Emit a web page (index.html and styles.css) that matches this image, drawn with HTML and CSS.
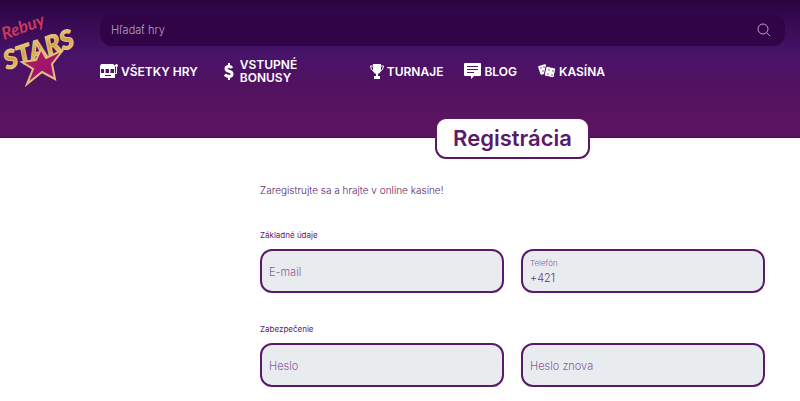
FILE: index.html
```html
<!DOCTYPE html>
<html lang="sk">
<head>
  <meta charset="UTF-8">
  <meta name="viewport" content="width=device-width, initial-scale=1.0">
  <title>Registrácia - Rebuy Stars</title>
  <link rel="stylesheet" href="styles.css">
</head>
<body>
  <header class="header">
    <a href="#" class="logo">
      <svg width="90" height="90" viewBox="0 0 90 90">
        <defs>
          <linearGradient id="gold" x1="0" y1="0" x2="0" y2="1">
            <stop offset="0" stop-color="#f6e3a0"/>
            <stop offset="0.5" stop-color="#cf9a45"/>
            <stop offset="1" stop-color="#f3d58a"/>
          </linearGradient>
          <linearGradient id="ruby" x1="0" y1="0" x2="1" y2="1">
            <stop offset="0" stop-color="#b81a65"/>
            <stop offset="1" stop-color="#8c1170"/>
          </linearGradient>
        </defs>
        <text class="logo-top" x="4" y="40" transform="rotate(-20 4 40)">Rebuy</text>
        <text class="logo-bottom" x="7" y="70" transform="rotate(-19 7 70)">STARS</text>
        <path d="M41 49 L46 58 L63 50 L52 64 L55 79 L42 72 L27 84 L33 69 L22 62 L36 60 Z" fill="url(#ruby)" stroke="#e3bd7c" stroke-width="2"/>
      </svg>
    </a>
    <div class="header-main">
      <form class="search">
        <input type="search" class="search-input" placeholder="Hľadať hry" aria-label="Hľadať hry">
        <button type="button" class="search-button" aria-label="Hľadať">
          <svg width="14" height="14" viewBox="0 0 14 14" fill="none" stroke="#b9a3c6" stroke-width="1">
            <circle cx="6" cy="6" r="5"/>
            <path d="M9.6 9.6 L13 13"/>
          </svg>
        </button>
      </form>
      <nav class="menu">
        <a href="#" class="menu-item">
          <svg width="18" height="16" viewBox="0 0 18 16">
            <path d="M2 1 H12 Q15 1 15 4 V15 H0 V4 Q0 1 2 1 Z" fill="#fff"/>
            <path d="M15 10.5 H16.5 V4" fill="none" stroke="#fff"/>
            <circle cx="16.5" cy="2.5" r="1.5" fill="#fff"/>
            <path d="M1 6 H4 V10 H1 Z M5.5 6 H9 V10 H5.5 Z M10.5 6 H14 V10 H10.5 Z M5 12 H11 V13 H5 Z" fill="#521466"/>
          </svg>
          <span>VŠETKY HRY</span>
        </a>
        <a href="#" class="menu-item menu-item-wide">
          <svg width="10" height="17" viewBox="0 0 10 17" fill="none" stroke="#fff" stroke-width="3">
            <path d="M8 5 Q7 3.5 5 3.5 Q2 3.5 2 5.7 Q2 7.5 5 8.2 Q8 9 8 11 Q8 13.5 5 13.5 Q2.5 13.5 1 11.5"/>
            <path d="M5 0 V4 M5 13 V17" stroke-width="2"/>
          </svg>
          <span>VSTUPNÉ BONUSY</span>
        </a>
        <a href="#" class="menu-item">
          <svg width="14" height="15" viewBox="0 0 14 15">
            <path d="M3 0 H11 V5 Q11 9 8 10 V12 H10 V15 H4 V12 H6 V10 Q3 9 3 5 Z" fill="#fff"/>
            <path d="M3 2 H0.5 Q0.5 6 4 7.5 M11 2 H13.5 Q13.5 6 10 7.5" fill="none" stroke="#fff"/>
          </svg>
          <span>TURNAJE</span>
        </a>
        <a href="#" class="menu-item">
          <svg width="17" height="16" viewBox="0 0 17 16">
            <path d="M1 0 H16 Q17 0 17 1 V12 Q17 13 16 13 H10 L7 16 V13 H1 Q0 13 0 12 V1 Q0 0 1 0 Z" fill="#fff"/>
            <path d="M3 3.5 H14 M3 6.5 H14 M3 9.5 H10" stroke="#521466"/>
          </svg>
          <span>BLOG</span>
        </a>
        <a href="#" class="menu-item">
          <svg width="18" height="14" viewBox="0 0 18 14">
            <rect x="1" y="1" width="8" height="9" rx="1" transform="rotate(-18 5 5)" fill="#fff"/>
            <rect x="7" y="3" width="10" height="10" rx="1" transform="rotate(12 12 8)" fill="#fff" stroke="#521466"/>
            <g fill="#521466">
              <circle cx="3" cy="4" r="0.7"/>
              <circle cx="6" cy="3" r="0.7"/>
              <circle cx="5" cy="7" r="0.7"/>
              <circle cx="11" cy="6" r="0.7"/>
              <circle cx="15" cy="7" r="0.7"/>
              <circle cx="10" cy="10" r="0.7"/>
              <circle cx="14" cy="11" r="0.7"/>
            </g>
          </svg>
          <span>KASÍNA</span>
        </a>
      </nav>
    </div>
  </header>

  <main class="content">
    <h1 class="title">Registrácia</h1>
    <p class="intro">Zaregistrujte sa a hrajte v online kasíne!</p>
    <form class="form">
      <fieldset class="group">
        <legend>Základné údaje</legend>
        <div class="fields">
          <input type="email" class="field" placeholder="E-mail" aria-label="E-mail">
          <div class="field field-labeled">
            <label for="phone">Telefón</label>
            <input type="tel" id="phone" value="+421">
          </div>
        </div>
      </fieldset>
      <fieldset class="group">
        <legend>Zabezpečenie</legend>
        <div class="fields">
          <input type="password" class="field" placeholder="Heslo" aria-label="Heslo">
          <input type="password" class="field" placeholder="Heslo znova" aria-label="Heslo znova">
        </div>
      </fieldset>
    </form>
  </main>
</body>
</html>
```
FILE: styles.css
```css
* {
  box-sizing: border-box;
}

body {
  margin: 0;
  font-family: Inter, "Open Sans", sans-serif;
  background: #ffffff;
  color: #5a1a6b;
}

input,
button {
  font-family: inherit;
}

/* Header with the purple gradient */
.header {
  display: flex;
  min-height: 138px;
  padding-right: 15px;
  background: linear-gradient(#2a043f 0, #48136a 40%, #53125f 65%, #5c1463 100%);
  border-bottom: 1px solid #430b50;
}

.logo {
  flex: 0 0 100px;
}

.logo svg {
  display: block;
}

.logo-top {
  font-family: Lato, sans-serif;
  font-size: 17px;
  font-style: italic;
  font-weight: 700;
  fill: #c93a5c;
}

.logo-bottom {
  font-family: Lato, sans-serif;
  font-size: 26px;
  font-style: italic;
  font-weight: 900;
  fill: url(#gold);
  stroke: #e9c777;
}

.header-main {
  flex: 1;
  padding-top: 14px;
}

/* Search bar */
.search {
  display: flex;
  align-items: center;
  height: 32px;
  padding: 0 14px 0 11px;
  border-radius: 12px;
  background: #310447;
}

.search-input {
  flex: 1;
  padding: 0;
  border: none;
  outline: none;
  background: none;
  color: #b9a3c6;
  font-size: 11px;
  font-weight: 300;
}

.search-input::placeholder {
  color: #b9a3c6;
}

.search-button {
  padding: 0;
  border: none;
  background: none;
  line-height: 0;
  cursor: pointer;
}

/* Main menu */
.menu {
  display: flex;
  align-items: center;
  gap: 21px;
  margin-top: 12px;
}

.menu-item {
  display: flex;
  align-items: center;
  gap: 3px;
  color: #ffffff;
  font-size: 12px;
  font-weight: 600;
  line-height: 13px;
  text-decoration: none;
}

.menu-item svg {
  flex: none;
}

.menu-item-wide {
  gap: 6px;
  width: 130px;
  padding: 0 35px 0 5px;
}

/* Registration form */
.content {
  padding: 0 35px 15px 260px;
}

.title {
  position: relative;
  width: fit-content;
  margin: -21px auto 0;
  padding: 6px 16px;
  border: 2px solid #5a1563;
  border-radius: 11px;
  background: #ffffff;
  font-size: 22px;
  font-weight: 600;
  line-height: 26px;
}

.intro {
  margin: 24px 0 0;
  font-size: 10px;
  font-weight: 300;
  line-height: 14px;
}

.form {
  margin-top: 32px;
}

.group {
  min-width: 0;
  margin: 0 0 30px;
  padding: 0;
  border: none;
}

.group:last-child {
  margin-bottom: 0;
}

.group legend {
  padding: 0 0 8px;
  font-size: 8px;
  line-height: 12px;
}

.fields {
  display: grid;
  grid-template-columns: 1fr 1fr;
  gap: 17px;
}

.field {
  width: 100%;
  height: 44px;
  padding: 2px 7px 0;
  border: 2px solid #5a1a6b;
  border-radius: 12px;
  background: #e9ecef;
  color: #8a5d96;
  font-size: 11px;
  font-weight: 300;
}

.field::placeholder {
  color: #8a5d96;
}

.field-labeled {
  display: flex;
  flex-direction: column;
  justify-content: center;
  padding-top: 0;
}

.field-labeled label {
  font-size: 8px;
  line-height: 14px;
}

.field-labeled input {
  width: 100%;
  padding: 0;
  border: none;
  outline: none;
  background: none;
  color: #69337a;
  font-size: 11px;
  font-weight: 300;
  line-height: 16px;
}
```
